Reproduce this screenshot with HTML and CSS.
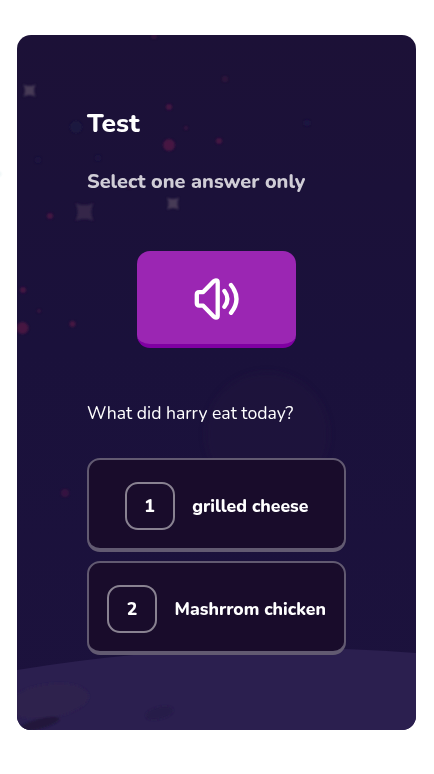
FILE: index.html
```html
<!DOCTYPE html>
<html lang="en">
<head>
<meta charset="utf-8">
<title>Test</title>
<link rel="stylesheet" href="styles.css">
</head>
<body>
<main class="card">
  <svg class="scenery" viewBox="17 35 399 695" aria-hidden="true">
    <defs>
      <filter id="soft" x="-50%" y="-50%" width="200%" height="200%"><feGaussianBlur stdDeviation=".8"/></filter>
      <filter id="haze" x="-50%" y="-50%" width="200%" height="200%"><feGaussianBlur stdDeviation="3"/></filter>
      <path id="star" d="M-8-8Q0-4 8-8Q4 0 8 8Q0 4-8 8Q-4 0-8-8Z"/>
    </defs>
    <circle cx="267" cy="434" r="62" fill="#20123c" opacity=".4" filter="url(#haze)"/>
    <path d="M17 670Q150 648 285 648Q350 648 416 653V730H17Z" fill="#2b1f4f"/>
    <g filter="url(#soft)">
      <ellipse cx="48" cy="701" rx="41" ry="17" transform="rotate(-8 48 701)" fill="#2d204e"/>
      <ellipse cx="39" cy="724" rx="21" ry="5" transform="rotate(-15 39 724)" fill="#21163b"/>
      <ellipse cx="159.500" cy="713" rx="14" ry="6" transform="rotate(-14 159.500 713)" fill="#251b48"/>
    </g>
    <g filter="url(#soft)" fill="#471642">
      <circle cx="169" cy="145" r="6"/>
      <circle cx="169" cy="107" r="3"/>
      <circle cx="219" cy="141" r="3"/>
      <circle cx="50" cy="216" r="3"/>
      <circle cx="22.500" cy="328" r="6"/>
      <circle cx="23" cy="290" r="3"/>
      <circle cx="72.500" cy="324" r="3"/>
      <circle cx="65" cy="493" r="4" opacity=".6"/>
      <circle cx="186" cy="128" r="2" opacity=".7"/>
      <circle cx="39" cy="311" r="2" opacity=".6"/>
      <circle cx="225" cy="79" r="3" opacity=".45"/>
      <circle cx="154" cy="36" r="3" opacity=".5"/>
      <circle cx="129" cy="187" r="2" opacity=".5"/>
    </g>
    <g filter="url(#soft)" fill="#1b1944">
      <circle cx="76" cy="127" r="6" opacity=".7"/>
      <circle cx="38" cy="160" r="3" opacity=".6"/>
      <circle cx="98" cy="158" r="3" opacity=".6"/>
      <circle cx="307" cy="123" r="3"/>
    </g>
    <g filter="url(#soft)">
      <use href="#star" transform="translate(29.500 90.500) scale(.76)" fill="#473b56"/>
      <use href="#star" transform="translate(173 203.500) scale(.76)" fill="#473b56"/>
      <use href="#star" transform="translate(84.500 212) scale(1.120)" fill="#35284a"/>
    </g>
  </svg>
  <div class="content">
    <h1 class="title">Test</h1>
    <h2 class="hint">Select one answer only</h2>
    <button class="listen" aria-label="Play audio">
      <svg class="speaker" viewBox="0 0 48 48">
        <path d="M3.800 19.500Q3.800 17.100 6.200 17.100H10.200L20.700 6.300Q21.700 5.300 22.900 5.300Q24.700 5.300 24.700 7.300V40.700Q24.700 42.500 22.900 42.500Q21.700 42.500 20.700 41.500L10.200 30.700H6.200Q3.800 30.700 3.800 28.300ZM31.400 16Q37.400 23.900 31.400 31.800M38 10Q49 23.900 38 37.800"/>
      </svg>
    </button>
    <p class="question">What did harry eat today?</p>
    <div class="answers">
      <button class="answer"><span class="number">1</span><span class="label">grilled cheese</span></button>
      <button class="answer"><span class="number">2</span><span class="label">Mashrrom chicken</span></button>
    </div>
  </div>
</main>
</body>
</html>
```
FILE: styles.css
```css
* { box-sizing: border-box; }
body {
  margin: 0;
  height: 774px;
  padding: 35px 18px 44px 17px;
  background: radial-gradient(circle at -1px 174px, #f0f7f8 1px, #fff 4px);
  color: #fff;
  font-family: Nunito, "Open Sans", sans-serif;
  overflow: hidden;
}
.card {
  position: relative;
  width: 399px;
  height: 695px;
  border-radius: 14px;
  overflow: hidden;
  background: linear-gradient(#1c1137, #1a113b 45%, #1c123d);
}
.scenery { position: absolute; inset: 0; width: 100%; height: 100%; }
.content {
  position: relative;
  display: flex;
  flex-direction: column;
  padding: 70px 70px 0;
}
.title, .hint, .question { margin: 0; white-space: nowrap; }
.title { font-size: 26.400px; line-height: 36px; font-weight: 800; }
.hint {
  margin-top: 27px;
  font-size: 19.850px;
  line-height: 28px;
  font-weight: 800;
  color: #d0cdd6;
}
.listen {
  align-self: center;
  display: flex;
  justify-content: center;
  align-items: center;
  width: 159px;
  height: 97px;
  margin-top: 55px;
  padding: 0;
  border: 0;
  border-bottom: 4px solid #8000a3;
  border-radius: 13px;
  background: #9b26b3;
}
.speaker {
  width: 48px;
  height: 48px;
  margin-top: 3px;
  fill: none;
  stroke: #fff;
  stroke-width: 4.300;
  stroke-linecap: round;
  stroke-linejoin: round;
}
.question { margin-top: 53px; font-size: 17.600px; line-height: 24px; }
.answers { display: grid; gap: 9px; margin-top: 33px; }
.answer {
  display: flex;
  justify-content: center;
  align-items: center;
  gap: 17.600px;
  height: 94px;
  padding: 4px 0 0;
  border: 2px solid #625a71;
  border-bottom-width: 4px;
  border-radius: 13px;
  background: #190c2b;
  color: #fff;
  font: 800 17.600px/24px Nunito, "Open Sans", sans-serif;
}
.number {
  display: grid;
  place-items: center;
  width: 50px;
  height: 48px;
  border: 2px solid #898291;
  border-radius: 13px;
}
.label { white-space: nowrap; }
```
